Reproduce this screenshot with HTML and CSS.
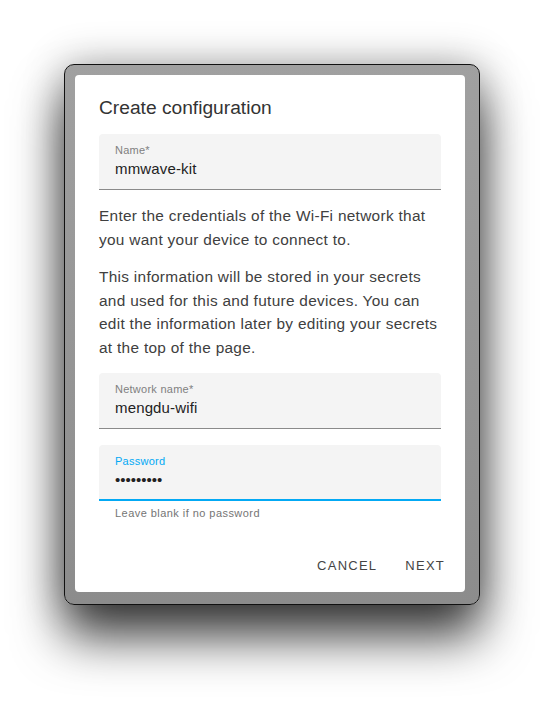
FILE: index.html
```html
<!DOCTYPE html>
<html lang="en">
<head>
    <meta charset="UTF-8">
    <meta name="viewport" content="width=device-width, initial-scale=1.0">
    <title>Create configuration</title>
    <link rel="stylesheet" href="styles.css">
</head>
<body>

    <!-- Dialog window -->
    <div class="frame">
        <div class="dialog">
            <h2 class="title">Create configuration</h2>

            <div class="field">
                <span class="field-label">Name*</span>
                <span class="field-value">mmwave-kit</span>
            </div>

            <p class="text">Enter the credentials of the Wi-Fi network that you want your device to connect to.</p>
            <p class="text">This information will be stored in your secrets and used for this and future devices. You can edit the information later by editing your secrets at the top of the page.</p>

            <div class="field">
                <span class="field-label">Network name*</span>
                <span class="field-value">mengdu-wifi</span>
            </div>

            <div class="field focused">
                <span class="field-label">Password</span>
                <span class="field-value dots">•••••••••</span>
            </div>
            <div class="helper">Leave blank if no password</div>

            <div class="actions">
                <button class="btn">Cancel</button>
                <button class="btn">Next</button>
            </div>
        </div>
    </div>

</body>
</html>
```

FILE: styles.css
```css
body {
    font-family: "Liberation Sans", Arial, sans-serif;
    margin: 0;
    min-height: 702px;
    background-color: #ffffff;
}
/* Outer window */
.frame {
    width: 390px;
    height: 517px;
    margin: 64px 0 0 64px;
    padding: 10px 14px 12px 10px;
    background: linear-gradient(#a0a0a0, #8c8c8c);
    border: 1px solid #111111;
    border-radius: 10px;
    box-shadow: 0 32px 50px rgba(0, 0, 0, 0.75), 0 0 40px rgba(0, 0, 0, 0.3);
}
.dialog {
    height: 100%;
    box-sizing: border-box;
    background-color: white;
    border-radius: 4px;
    padding: 20px 24px 0 24px;
    display: flex;
    flex-direction: column;
}
.title {
    margin: 0 0 13px 0;
    font-size: 19.2px;
    font-weight: 400;
    line-height: 26px;
    color: #333333;
}
/* Text fields */
.field {
    height: 55px;
    background-color: #f4f4f4;
    border-bottom: 1px solid #8a8a8a;
    border-radius: 4px 4px 0 0;
    padding: 0 16px;
    display: flex;
    flex-direction: column;
}
.field-label {
    font-size: 11px;
    letter-spacing: 0.25px;
    color: #808080;
    margin-top: 9px;
    line-height: 14px;
}
.field-value {
    font-size: 15px;
    letter-spacing: 0.15px;
    color: #222222;
    margin-top: 2px;
    line-height: 20px;
}
.field + .field {
    margin-top: 16px;
}
.focused {
    height: 54px;
    border-bottom: 2px solid #03a9f4;
}
.focused .field-label {
    color: #03a9f4;
}
.dots {
    letter-spacing: 0;
}
.helper {
    font-size: 11px;
    letter-spacing: 0.45px;
    color: #757575;
    padding: 6px 16px 0 16px;
    line-height: 13px;
}
.text {
    font-size: 15.4px;
    line-height: 23.5px;
    color: #404040;
    letter-spacing: 0.3px;
    margin: 14px 0 0 0;
}
.text + .field {
    margin-top: 14px;
}
/* Buttons */
.actions {
    display: flex;
    justify-content: flex-end;
    gap: 12px;
    margin-top: auto;
    margin-right: -12px;
    padding-bottom: 11px;
}
.btn {
    font-family: "Liberation Sans", Arial, sans-serif;
    font-size: 13px;
    letter-spacing: 1.25px;
    text-transform: uppercase;
    color: #444444;
    background: none;
    border: none;
    padding: 8px 8px;
}
```
